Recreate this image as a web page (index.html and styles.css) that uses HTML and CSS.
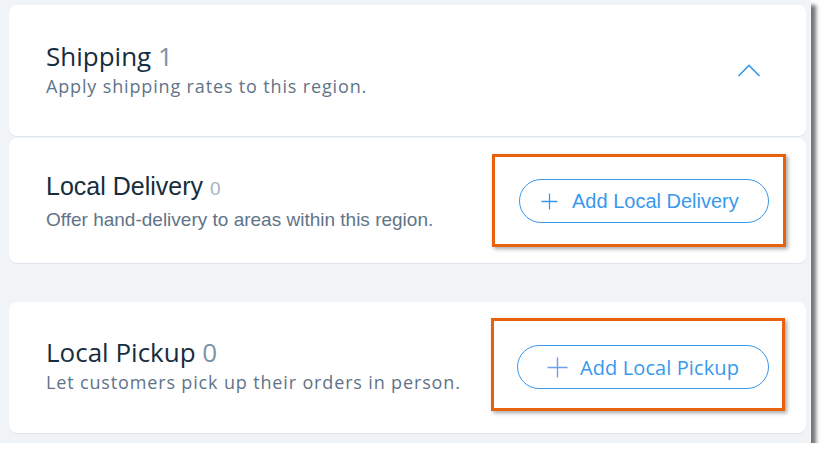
FILE: index.html
```html
<!DOCTYPE html>
<html>
<head>
<meta charset="utf-8">
<link rel="stylesheet" href="styles.css">
</head>
<body>
<div class="frame">
  <section class="card card-shipping">
    <div class="info">
      <h2 class="title madefor">Shipping <span class="count">1</span></h2>
      <p class="sub madefor">Apply shipping rates to this region.</p>
    </div>
    <svg class="chevron" width="24" height="13" viewBox="0 0 24 13"><polyline points="1.5,12 12,1.5 22.5,12" fill="none" stroke="#3899ec" stroke-width="1.6"/></svg>
  </section>
  <section class="card card-delivery">
    <div class="info">
      <h2 class="title title-helv helv">Local Delivery <span class="count-small">0</span></h2>
      <p class="sub sub-helv helv">Offer hand-delivery to areas within this region.</p>
    </div>
    <div class="highlight hl-delivery">
      <button class="btn btn-delivery helv">
        <svg width="17" height="17" viewBox="0 0 17 17"><path d="M8.5 0.5v16M0.5 8.5h16" stroke="#3899ec" stroke-width="1.3" fill="none"/></svg>
        <span>Add Local Delivery</span>
      </button>
    </div>
  </section>
  <section class="card card-pickup">
    <div class="info">
      <h2 class="title madefor">Local Pickup <span class="count">0</span></h2>
      <p class="sub madefor">Let customers pick up their orders in person.</p>
    </div>
    <div class="highlight hl-pickup">
      <button class="btn btn-pickup madefor">
        <svg width="21" height="21" viewBox="0 0 21 21"><path d="M10.5 0.5v20M0.5 10.5h20" stroke="#6d9ef0" stroke-width="1.4" fill="none"/></svg>
        <span>Add Local Pickup</span>
      </button>
    </div>
  </section>
</div>
</body>
</html>
```
FILE: styles.css
```css
html, body {
  margin: 0;
  padding: 0;
  background: #ffffff;
}
.frame {
  width: 802px;
  height: 438px;
  padding: 5px 0 0 9px;
  background: #f0f4f7;
  box-shadow: 5px 5px 4px rgba(0, 0, 0, 0.55);
  display: flex;
  flex-direction: column;
}
.card {
  width: 797px;
  box-sizing: border-box;
  background: #ffffff;
  border-radius: 8px;
  box-shadow: 0 1px 0 #dfe5ec;
  display: flex;
  align-items: center;
  justify-content: space-between;
  padding-left: 37px;
}
.card-shipping {
  height: 131px;
  padding-right: 45px;
  padding-bottom: 3px;
}
.card-delivery {
  height: 125px;
  margin-top: 2px;
  padding-right: 20px;
}
.card-pickup {
  height: 131px;
  margin-top: 39px;
  padding-right: 21px;
  padding-bottom: 6px;
}
.madefor {
  font-family: "Open Sans", "Noto Sans", sans-serif;
}
.helv {
  font-family: "Liberation Sans", Arial, sans-serif;
}
.title {
  margin: 0;
  font-weight: 400;
  font-size: 26px;
  line-height: 30px;
  color: #162d3d;
}
.title-helv {
  font-size: 25px;
}
.count {
  color: #7a92a5;
}
.count-small {
  font-size: 19px;
  color: #a6b4c1;
}
.sub {
  margin: 4px 0 0;
  font-size: 18px;
  letter-spacing: 0.85px;
  line-height: 22px;
  color: #5f7488;
}
.sub-helv {
  margin-top: 5px;
  font-size: 19px;
  letter-spacing: 0;
}
.chevron {
  display: block;
  margin-top: 2px;
}
.highlight {
  border: 3px solid #e8620e;
  box-shadow: 2px 2px 4px rgba(0, 0, 0, 0.35);
}
.hl-delivery {
  padding: 22px 14px 21px 24px;
}
.hl-pickup {
  padding: 24px 13px 19px 23px;
}
.btn {
  height: 44px;
  box-sizing: border-box;
  border: 1px solid #3899ec;
  border-radius: 22px;
  background: #ffffff;
  color: #3899ec;
  font-size: 20px;
  display: flex;
  align-items: center;
  padding: 0;
}
.btn-delivery {
  width: 250px;
  padding-left: 21px;
  gap: 14px;
}
.btn-pickup {
  width: 252px;
  padding-left: 29px;
  gap: 12px;
  letter-spacing: 0.1px;
}
.btn svg {
  display: block;
}
```
